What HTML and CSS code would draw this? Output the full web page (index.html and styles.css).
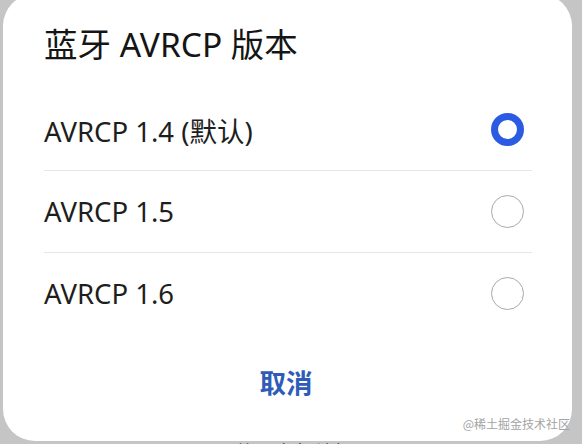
FILE: index.html
```html
<!DOCTYPE html>
<html lang="zh-CN">
<head>
<meta charset="utf-8">
<title>蓝牙 AVRCP 版本</title>
<link rel="stylesheet" href="styles.css">
</head>
<body>
<div class="screen">
  <div class="dialog">
    <h1 class="dialog-title">蓝牙 AVRCP 版本</h1>
    <ul class="options">
      <li class="option">
        <span class="option-label">AVRCP 1.4 (默认)</span>
        <span class="radio radio-on"></span>
      </li>
      <li class="option">
        <span class="option-label">AVRCP 1.5</span>
        <span class="radio"></span>
      </li>
      <li class="option">
        <span class="option-label">AVRCP 1.6</span>
        <span class="radio"></span>
      </li>
    </ul>
    <div class="actions">
      <button class="btn-cancel" type="button">取消</button>
    </div>
  </div>
  <div class="behind">蓝牙音频编解码器</div>
  <div class="watermark">@稀土掘金技术社区</div>
</div>
</body>
</html>
```
FILE: styles.css
```css
html, body {
  margin: 0;
  padding: 0;
}

body {
  width: 582px;
  height: 444px;
  overflow: hidden;
  background: #c5c5c5;
  font-family: "Noto Sans", "Noto Sans CJK SC", sans-serif;
  color: #1a1a1a;
}

.screen {
  position: relative;
  width: 582px;
  height: 444px;
  overflow: hidden;
}

.dialog {
  margin: -6px 0 0 3px;
  width: 569px;
  height: 447px;
  box-sizing: border-box;
  background: #ffffff;
  border-radius: 32px;
  padding: 30px 40px 0 41px;
  display: flex;
  flex-direction: column;
}

.dialog-title {
  margin: 0;
  font-size: 33.5px;
  line-height: 40px;
  font-weight: 400;
  color: #151515;
}

.options {
  list-style: none;
  margin: 25px 0 0;
  padding: 0;
}

.option {
  height: 81px;
  display: flex;
  align-items: center;
  justify-content: space-between;
  border-bottom: 1px solid #e6e6e6;
}

.option:last-child {
  border-bottom: none;
}

.option-label {
  font-size: 27.5px;
  color: #1e1e1e;
}

.radio {
  width: 33px;
  height: 33px;
  box-sizing: border-box;
  border-radius: 50%;
  border: 1.6px solid #a9a9a9;
  margin-right: 8px;
}

.radio-on {
  border: 7.5px solid #2b5be2;
  background: #ffffff;
}

.actions {
  display: flex;
  justify-content: center;
  padding-top: 20px;
}

.btn-cancel {
  border: none;
  background: none;
  font-family: "Noto Sans CJK SC", sans-serif;
  font-size: 26.5px;
  font-weight: 700;
  color: #2e5cb8;
  padding: 10px 20px;
  line-height: 36px;
  margin-right: 4px;
}

.behind {
  margin: 2px 0 0 234px;
  font-family: "Noto Sans CJK SC", sans-serif;
  font-size: 20px;
  line-height: 20px;
  color: #111;
}

.watermark {
  position: absolute;
  right: 12px;
  bottom: 12px;
  font-family: "Noto Sans CJK SC", sans-serif;
  font-size: 12px;
  line-height: 16px;
  color: #a3a3a3;
}
```
